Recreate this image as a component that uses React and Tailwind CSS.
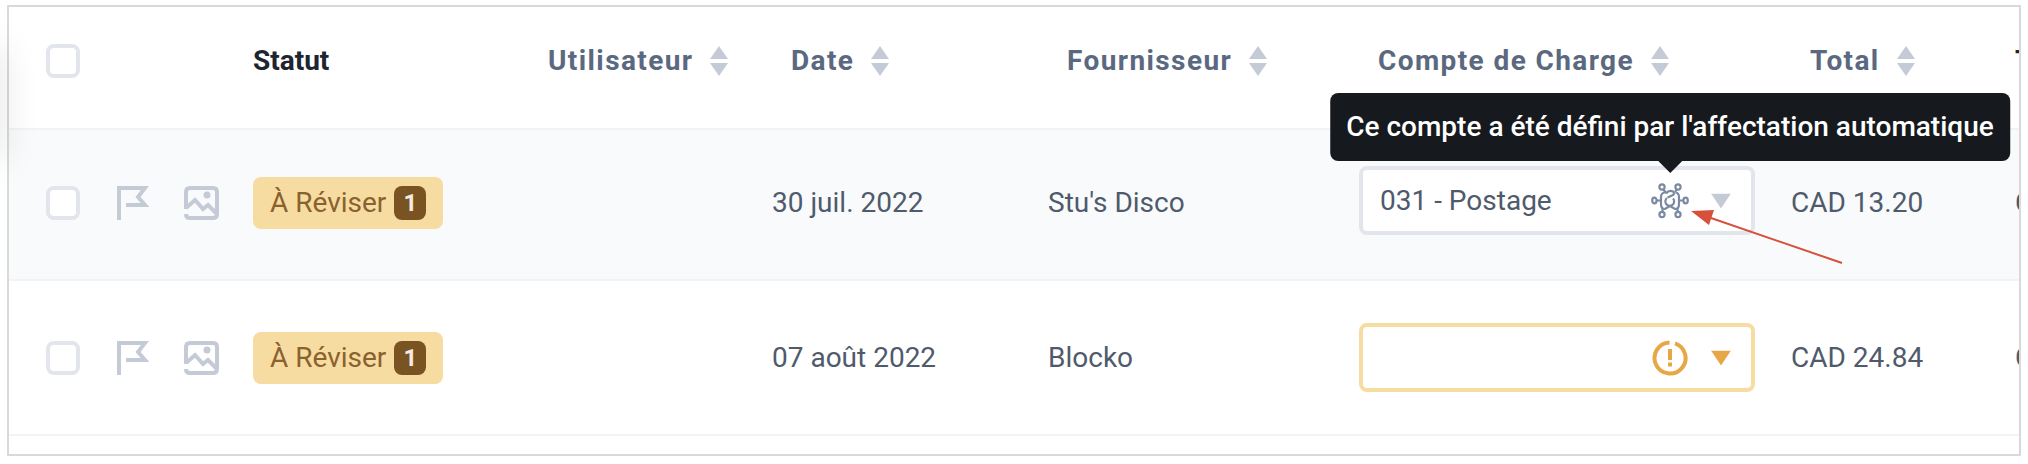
import { useState } from "react";

const columns = [
  { key: "user", label: "Utilisateur" },
  { key: "date", label: "Date" },
  { key: "vendor", label: "Fournisseur" },
  { key: "account", label: "Compte de Charge" },
  { key: "total", label: "Total" },
];

const expenses = [
  {
    id: 1,
    status: "À Réviser",
    count: 1,
    date: "30 juil. 2022",
    vendor: "Stu's Disco",
    account: "031 - Postage",
    total: "CAD 13.20",
    tax: "C",
  },
  {
    id: 2,
    status: "À Réviser",
    count: 1,
    date: "07 août 2022",
    vendor: "Blocko",
    account: "",
    total: "CAD 24.84",
    tax: "C",
  },
];

function SortIcon() {
  return (
    <svg width="18" height="30" viewBox="0 0 18 30" fill="#c5cbd6">
      <path d="M9 0L18 13H0z" />
      <path d="M0 17H18L9 30z" />
    </svg>
  );
}

function FlagIcon() {
  return (
    <svg width="32" height="36" viewBox="0 0 32 36" fill="none" stroke="#c5cbd6" strokeWidth="4">
      <path d="M2 35V3H28L21 12L28 20H9" />
    </svg>
  );
}

function PictureIcon() {
  return (
    <svg width="36" height="36" viewBox="0 0 36 36" fill="none" stroke="#c5cbd6" strokeWidth="4">
      <path d="M2 24V7Q2 3 6 3H29Q33 3 33 7V29Q33 33 29 33H6Q2 33 2 29" />
      <path d="M2 23L11 15L19 24L24 20L33 29" />
      <circle cx="23" cy="10" r="3.5" fill="#c5cbd6" stroke="none" />
    </svg>
  );
}

function AutoIcon() {
  return (
    <svg width="38" height="36" viewBox="0 0 38 36" fill="none" stroke="#7b8aa3" strokeWidth="2.2">
      <circle cx="11" cy="4" r="2.6" />
      <circle cx="27" cy="4" r="2.6" />
      <ellipse cx="3.4" cy="17.5" rx="2.2" ry="2.8" />
      <ellipse cx="34.6" cy="17.5" rx="2.2" ry="2.8" />
      <circle cx="11" cy="31.5" r="2.6" />
      <circle cx="27" cy="31.5" r="2.6" />
      <path d="M5.5 17.5H10M28 17.5H32.5M12.5 6.5L15 10M25.5 6.5L24 9M11.5 29V25M26.5 29V25" />
      <path d="M14 9.5Q10 10 10 14V21Q10 26 14 26L19 23L24 26Q28 26 28 21V14Q28 10 24.5 9.5" />
      <path d="M15 10.5Q18 6.5 22 8.5Q24.5 11 21 12.5L16.5 14.5" />
      <path d="M22 15.5A4.4 4.4 0 1 1 16 15" />
    </svg>
  );
}

function WarningIcon() {
  return (
    <svg width="38" height="36" viewBox="0 0 38 36" fill="none" stroke="#e8a746" strokeWidth="4">
      <path d="M24 3.3A15.5 15.5 0 1 1 18.5 2.5" />
      <path d="M19 9V20M19 22.5V26.5" />
    </svg>
  );
}

function Checkbox({ label }) {
  return (
    <input
      type="checkbox"
      aria-label={label}
      className="block size-[34px] appearance-none rounded-lg border-4 border-[#e2e5eb] bg-white checked:bg-[#5b6980]"
    />
  );
}

function AccountSelect({ expense }) {
  const [account, setAccount] = useState(expense.account);
  const filled = account !== "";

  return (
    <div className={`relative w-[396px] ${filled ? "mb-1" : ""}`}>
      <select
        aria-label="Compte de Charge"
        value={account}
        onChange={(e) => setAccount(e.target.value)}
        className={`block h-[69px] w-full appearance-none rounded-lg border-4 bg-white pr-28 pl-[17px] text-[28px] text-[#4f5a6b] ${
          filled ? "border-[#e2e5eb]" : "border-[#f6dca0]"
        }`}
      >
        <option value=""></option>
        <option value="031 - Postage">031 - Postage</option>
      </select>
      <div className="absolute top-1/2 right-[66px] -translate-y-1/2">
        {filled ? <AutoIcon /> : <WarningIcon />}
        {filled && (
          <div
            role="tooltip"
            className="absolute bottom-full left-1/2 z-10 mb-[22px] -translate-x-1/2 rounded-lg bg-[#16191d] px-4 py-[17px] text-[28px] leading-[34px] font-medium whitespace-nowrap text-white"
          >
            Ce compte a été défini par l'affectation automatique
            <svg width="24" height="12" viewBox="0 0 24 12" className="absolute top-full left-1/2 -translate-x-1/2">
              <path d="M0 0H24L12 12z" fill="#16191d" />
            </svg>
          </div>
        )}
      </div>
      <svg
        width="20"
        height="15"
        viewBox="0 0 20 15"
        className="pointer-events-none absolute top-1/2 right-6 -translate-y-1/2"
      >
        <path d="M0 0H20L10 15z" fill={filled ? "#c5cbd6" : "#e8a746"} />
      </svg>
    </div>
  );
}

export default function App() {
  return (
    <div className="relative overflow-hidden bg-white px-[7px] pt-[5px] pb-2 font-[Roboto,sans-serif]">
      <div className="overflow-hidden border-2 border-[#d9d9d9] pb-[18px]">
        <table className="w-full min-w-[2120px] table-fixed border-collapse text-left text-[28px] leading-[34px] text-[#4f5a6b]">
          <colgroup>
            <col className="w-[108px]" />
            <col className="w-[67px]" />
            <col className="w-[69px]" />
            <col className="w-[276px]" />
            <col className="w-[243px]" />
            <col className="w-[276px]" />
            <col className="w-[311px]" />
            <col className="w-[432px]" />
            <col className="w-[224px]" />
            <col />
          </colgroup>
          <thead>
            <tr className="h-[122px] border-b-2 border-[#f1f3f5]">
              <th className="pb-3.5 pl-[37px]">
                <Checkbox label="Tout sélectionner" />
              </th>
              <td></td>
              <td></td>
              <th className="pb-3.5 font-bold text-[#1e2530]">Statut</th>
              {columns.map((col) => (
                <th key={col.key} className="pb-3.5 pl-[19px]">
                  <button type="button" className="flex items-center gap-[17px] font-bold tracking-wider text-[#5b6980]">
                    {col.label}
                    <SortIcon />
                  </button>
                </th>
              ))}
              <th className="pb-3.5 font-bold text-[#1e2530]">T</th>
            </tr>
          </thead>
          <tbody>
            {expenses.map((expense) => (
              <tr
                key={expense.id}
                className="h-[155px] border-b-2 border-[#f1f3f5] odd:h-[151px] odd:bg-[#f9fafc] odd:*:pb-1"
              >
                <td className="pl-[37px]">
                  <Checkbox label={expense.vendor} />
                </td>
                <td>
                  <button type="button" aria-label="Marquer" className="block">
                    <FlagIcon />
                  </button>
                </td>
                <td>
                  <button type="button" aria-label="Voir le reçu" className="block">
                    <PictureIcon />
                  </button>
                </td>
                <td>
                  <span className="inline-flex h-[52px] items-center gap-2 rounded-lg bg-[#f6dca0] px-[17px] align-middle text-[#8a6130]">
                    {expense.status}
                    <span className="flex h-[34px] w-8 items-center justify-center rounded-lg bg-[#7a5322] text-2xl font-bold text-[#f3ece2]">
                      {expense.count}
                    </span>
                  </span>
                </td>
                <td></td>
                <td>{expense.date}</td>
                <td>{expense.vendor}</td>
                <td>
                  <AccountSelect expense={expense} />
                </td>
                <td>{expense.total}</td>
                <td>{expense.tax}</td>
              </tr>
            ))}
          </tbody>
        </table>
      </div>

      {/* Shadow of the side menu */}
      <div className="pointer-events-none absolute top-12 -left-4 h-28 w-4 shadow-[0_0_36px_rgba(0,0,0,0.16)]"></div>

      {/* Arrow pointing at the automatic icon */}
      <svg
        width="152"
        height="54"
        viewBox="0 0 152 54"
        className="pointer-events-none absolute top-[210px] left-[1691px]"
      >
        <path d="M20 8L151 53" stroke="#d6503c" strokeWidth="2" />
        <path d="M0 1L23 0L18 15z" fill="#d6503c" />
      </svg>
    </div>
  );
}
